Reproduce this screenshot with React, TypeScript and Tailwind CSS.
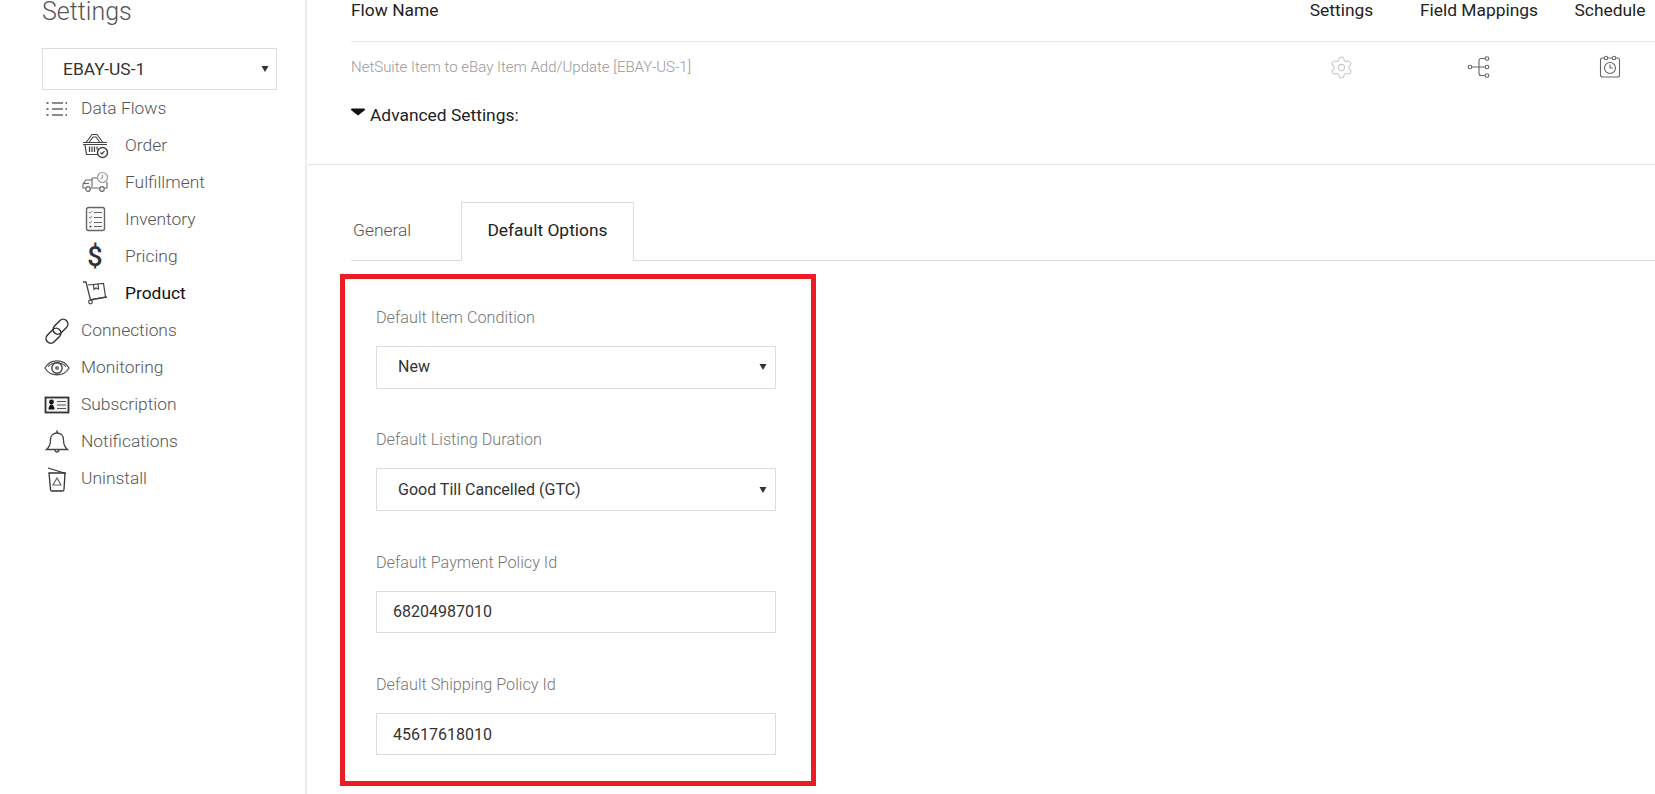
import React from "react";
import { Settings as Gear } from "lucide-react";

const Icon = ({ children }: { children: React.ReactNode }) => (
  <svg width="28" height="28" viewBox="0 0 28 28" fill="none" stroke="#444" strokeWidth="1.2" className="shrink-0">
    {children}
  </svg>
);

const ListIcon = () => (
  <Icon>
    <path d="M9 8h11M9 14h11M9 20h11" stroke="#666" strokeWidth="1.3" />
    <path d="M3.500 8h2M3.500 14h2M3.500 20h2M22.500 8h1.500M22.500 14h1.500M22.500 20h1.500" stroke="#444" strokeWidth="1.6" />
  </Icon>
);

const BasketIcon = () => (
  <Icon>
    <path d="M5 10.500 11 2.500h5l6 8M8 10.500l4-5.500h3l4 5.500" strokeWidth="1.100" />
    <path d="M2 10.500h24M2 12.500h24M4 13l1.500 9.500H17" strokeWidth="1.200" />
    <path d="M8.500 14.500v5.500M11 14.500v5.500M13.500 14.500v5.500M16 14.500v3" strokeWidth="1.300" />
    <circle cx="21.500" cy="20.500" r="5" fill="#fff" strokeWidth="1.500" />
    <path d="m19.500 20.500 1.500 1.500 2.500-3" />
  </Icon>
);

const TruckIcon = () => (
  <Icon>
    <g stroke="#666">
      <path d="M11 9h6M11 9v9M26 13v6h-2.500M18.500 19h-9M4.500 19H2v-4l3-4h6" strokeWidth="1.100" />
      <path d="M3 14.500h5" />
      <circle cx="7" cy="20" r="2.300" fill="#fff" strokeWidth="1.200" />
      <circle cx="21" cy="20" r="2.300" fill="#fff" strokeWidth="1.200" />
    </g>
    <circle cx="21.500" cy="8.500" r="5" fill="#fff" stroke="#999" />
    <path d="M21.500 5.500v3l-2 1.500" stroke="#999" />
  </Icon>
);

const ChecklistIcon = () => (
  <Icon>
    <rect x="5.500" y="1.500" width="18" height="23" rx="2" strokeWidth="1.400" stroke="#666" fill="#f8f8f8" />
    <path d="m8 6 1.200 1.200L11 5M8 11l1.200 1.200L11 10M8 16l1.200 1.200L11 15" stroke="#777" strokeWidth="0.900" />
    <path d="M13 6.500h8M13 11.500h8M13 16.500h8M13 20.500h8" stroke="#666" />
    <circle cx="9.500" cy="20.500" r="1" fill="#444" stroke="none" />
  </Icon>
);

const TruckBoxIcon = () => (
  <Icon>
    <path d="M2 2h3l4.500 18 16.500-3" strokeWidth="1.300" />
    <circle cx="9.500" cy="22" r="1.800" fill="#fff" />
    <path d="m7 5 15.500-1.500L24.500 17 10 19.500" />
    <path d="M12.500 4.500l.5 5 2-1.500 2.500 1-.5-5.500" />
  </Icon>
);

const LinkIcon = () => (
  <Icon>
    <g stroke="#333" strokeWidth="1.500">
      <rect x="2" y="14" width="17" height="9.500" rx="4.750" transform="rotate(-45 10.500 18.750)" />
      <rect x="9" y="5" width="17" height="9.500" rx="4.750" transform="rotate(-45 17.500 9.750)" />
    </g>
  </Icon>
);

const EyeIcon = () => (
  <Icon>
    <path d="M2 14C7 4.500 21 4.500 26 14 21 23 7 23 2 14Z" stroke="#555" strokeWidth="1.300" />
    <path d="M5 12.500C10 7.500 18 7.500 23 12.500" stroke="#555" />
    <circle cx="14" cy="14" r="5.200" stroke="#444" strokeWidth="1.400" />
    <circle cx="14" cy="14" r="2" fill="#777" stroke="none" />
  </Icon>
);

const CardIcon = () => (
  <Icon>
    <rect x="2.500" y="6.500" width="23" height="15" fill="#f4f4f4" stroke="#333" strokeWidth="1.800" />
    <circle cx="8.500" cy="11" r="2.400" fill="#111" stroke="none" />
    <path d="M5.500 18.500c0-3 1.500-5 3-5s3 2 3 5Z" fill="#111" stroke="none" />
    <path d="M14 10.500h9M14 14h9M14 17.500h9" stroke="#555" />
  </Icon>
);

const BellIcon = () => (
  <Icon>
    <path d="M3.500 21.500c2.500-2 4-4.500 4-9.500 0-4.500 3-7 6.500-7s6.500 2.500 6.500 7c0 5 1.500 7.500 4 9.500Z" stroke="#444" strokeWidth="1.300" />
    <path d="M14 2.500V5M12 22c.3 2.500 3.700 2.500 4 0" stroke="#444" strokeWidth="1.500" />
  </Icon>
);

const TrashIcon = () => (
  <Icon>
    <path d="m5 3 18 5.500" stroke="#333" strokeWidth="1.300" />
    <path d="M6 8h16l-1 16.500a1.500 1.500 0 0 1-1.500 1.500h-10.500a1.500 1.500 0 0 1-1.500-1.500Z" stroke="#333" strokeWidth="1.300" />
    <path d="m14 13 4 7h-8Z" stroke="#666" strokeWidth="1.200" />
  </Icon>
);

const Arrow = ({ className }: { className: string }) => (
  <svg width="8" height="7" viewBox="0 0 8 7" className={"absolute top-1/2 -translate-y-1/2 pointer-events-none " + className}>
    <path d="M0.500 0.500h7L4 6.500Z" fill="#333" />
  </svg>
);

const NavItem = ({ icon, label, sub, active }: { icon: React.ReactNode; label: string; sub?: boolean; active?: boolean }) => (
  <div className={sub ? "flex h-[37px] items-center gap-[16px] pl-[39px]" : "flex h-[37px] items-center gap-[10px] pl-px"}>
    {icon}
    <span className={active ? "text-[17.400px] text-[#111] font-normal" : "text-[17.400px] text-[#555] font-light"}>{label}</span>
  </div>
);

const Field = ({ label, children }: { label: string; children: React.ReactNode }) => (
  <div>
    <label className="block h-[20px] mb-[18px] leading-[20px] text-[16.200px] font-light text-[#777]">{label}</label>
    {children}
  </div>
);

const TextBox = ({ value }: { value: string }) => (
  <input
    defaultValue={value}
    className="block w-[400px] h-[42.500px] border border-[#ddd] pl-[16px] text-[16px] text-[#333] outline-none"
  />
);

export default function App() {
  return (
    <div className="flex h-[794px] overflow-hidden bg-white font-['Roboto',sans-serif]">
      {/* sidebar */}
      <aside className="w-[307px] shrink-0 border-r-2 border-[#eee] pl-[42px]">
        <h1 className="text-[25px] leading-[24px] font-light text-[#555] mb-[24px]">Settings</h1>
        <div className="relative w-[235px] h-[42px]">
          <select
            defaultValue="EBAY-US-1"
            className="w-full h-full appearance-none bg-white border border-[#ddd] pl-[20px] text-[17.400px] text-[#333] outline-none"
          >
            <option>EBAY-US-1</option>
          </select>
          <Arrow className="right-[8px]" />
        </div>
        <NavItem icon={<ListIcon />} label="Data Flows" />
        <NavItem sub icon={<BasketIcon />} label="Order" />
        <NavItem sub icon={<TruckIcon />} label="Fulfillment" />
        <NavItem sub icon={<ChecklistIcon />} label="Inventory" />
        <NavItem
          sub
          icon={<span className="w-[28px] text-center text-[27px] leading-[28px] font-medium text-[#333]">$</span>}
          label="Pricing"
        />
        <NavItem sub active icon={<TruckBoxIcon />} label="Product" />
        <NavItem icon={<LinkIcon />} label="Connections" />
        <NavItem icon={<EyeIcon />} label="Monitoring" />
        <NavItem icon={<CardIcon />} label="Subscription" />
        <NavItem icon={<BellIcon />} label="Notifications" />
        <NavItem icon={<TrashIcon />} label="Uninstall" />
      </aside>

      {/* main */}
      <main className="flex-1 min-w-0">
        <div className="h-[165px] border-b border-[#e6e6e6] pl-[44px]">
          <div className="grid h-[42px] grid-cols-[1fr_103px_172px_90px] border-b border-[#e6e6e6] text-[17.400px] leading-[20px] text-[#222]">
            <div>Flow Name</div>
            <div className="text-center">Settings</div>
            <div className="text-center">Field Mappings</div>
            <div className="text-center">Schedule</div>
          </div>
          <div className="grid h-[50px] grid-cols-[1fr_103px_172px_90px] items-center text-[15px] font-light text-[#999]">
            <div className="pt-[1px]">NetSuite Item to eBay Item Add/Update [EBAY-US-1]</div>
            <div className="flex justify-center">
              <Gear size={25} strokeWidth={1} color="#c8c8c8" />
            </div>
            <div className="flex justify-center">
              <svg width="24" height="24" viewBox="0 0 24 24" fill="none" stroke="#666" strokeWidth="1.100">
                <circle cx="3" cy="12" r="1.800" />
                <circle cx="20" cy="3.500" r="1.800" />
                <circle cx="20" cy="12" r="1.800" />
                <circle cx="20" cy="20.500" r="1.800" />
                <path d="M5 12h13M18 3.500h-4a2 2 0 0 0-2 2v13a2 2 0 0 0 2 2h4" />
              </svg>
            </div>
            <div className="flex justify-center">
              <svg width="24" height="24" viewBox="0 0 24 24" fill="none" stroke="#666" strokeWidth="1.100">
                <rect x="2.500" y="3" width="19" height="19" rx="2" />
                <circle cx="8" cy="3" r="1.700" fill="#fff" />
                <circle cx="16" cy="3" r="1.700" fill="#fff" />
                <circle cx="12" cy="13" r="5.500" />
                <path d="M12 9.500V13h3" />
              </svg>
            </div>
          </div>
          <div className="mt-[13px] flex items-center gap-[5px] text-[17.400px] leading-[20px] text-[#222]">
            <svg width="14" height="8" viewBox="0 0 14 8" className="-translate-y-[3px]">
              <path d="M1 0.500h12a1 1 0 0 1 .7 1.700L7 7.500 .3 2.200A1 1 0 0 1 1 .5Z" fill="#111" />
            </svg>
            <span>Advanced Settings:</span>
          </div>
        </div>

        <div className="pl-[44px] pt-[37px]">
          <div className="flex h-[59px] border-b border-[#ddd]">
            <div className="w-[110px] pl-[2px] text-[17.400px] leading-[57px] font-light text-[#555]">General</div>
            <div className="w-[173px] h-[59px] border border-b-0 border-[#ddd] bg-white text-center text-[17.400px] leading-[55px] text-[#222]">
              Default Options
            </div>
          </div>

          <div className="-ml-[11px] mt-[13px] w-[476px] h-[512px] border-[5px] border-[#ed1c24] pl-[31px] pt-[29px]">
            <div className="flex flex-col gap-[41.830px]">
              <Field label="Default Item Condition">
                <div className="relative w-[400px] h-[42.500px]">
                  <select
                    defaultValue="New"
                    className="w-full h-full appearance-none bg-white border border-[#ddd] pl-[21px] text-[16px] text-[#333] outline-none"
                  >
                    <option>New</option>
                  </select>
                  <Arrow className="right-[9px]" />
                </div>
              </Field>
              <Field label="Default Listing Duration">
                <div className="relative w-[400px] h-[42.500px]">
                  <select
                    defaultValue="Good Till Cancelled (GTC)"
                    className="w-full h-full appearance-none bg-white border border-[#ddd] pl-[21px] text-[16px] text-[#333] outline-none"
                  >
                    <option>Good Till Cancelled (GTC)</option>
                  </select>
                  <Arrow className="right-[9px]" />
                </div>
              </Field>
              <Field label="Default Payment Policy Id">
                <TextBox value="68204987010" />
              </Field>
              <Field label="Default Shipping Policy Id">
                <TextBox value="45617618010" />
              </Field>
            </div>
          </div>
        </div>
      </main>
    </div>
  );
}
